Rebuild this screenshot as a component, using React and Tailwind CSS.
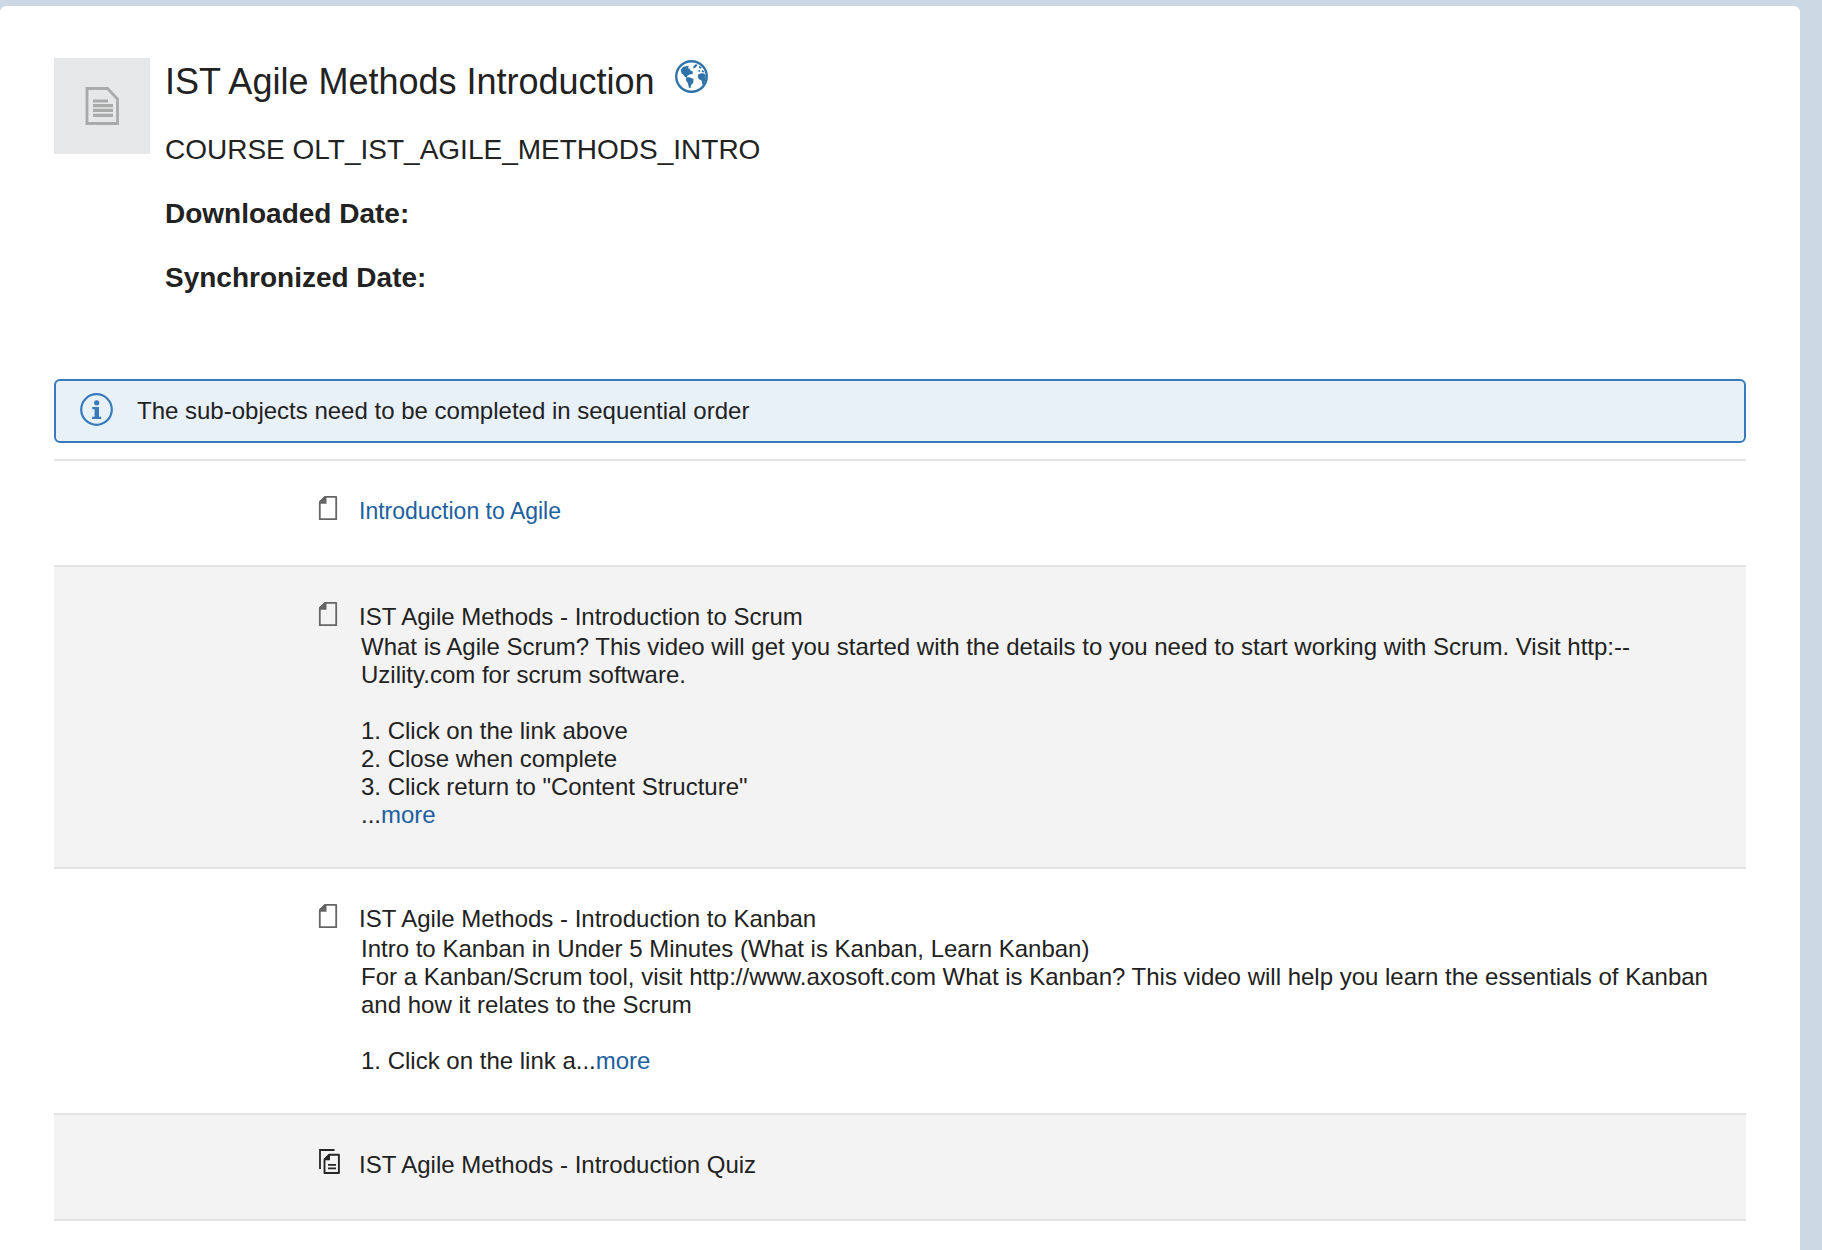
import React from "react";

function DocumentIcon() {
  return (
    <svg width="36" height="40" viewBox="0 0 36 40" fill="none" aria-hidden="true">
      <path d="M3 2.500h20.500l10 10.500v24.500H3z" stroke="#a9abab" strokeWidth="2.800" />
      <path d="M9 15h15M9 19.700h20M9 24.400h20M9 29.300h20" stroke="#a9abab" strokeWidth="3.200" />
    </svg>
  );
}

function GlobeIcon() {
  return (
    <svg width="33" height="33" viewBox="0 0 32 32" aria-hidden="true">
      <circle cx="16" cy="16" r="14.800" fill="none" stroke="#2f74a8" strokeWidth="2.300" />
      <path
        fill="#2f74a8"
        d="M5.500 9.500 8 6.500l4-.8 1.500.3L12.500 8l2 .5.500 2 2 .2.300 2.800-3 .5-2.300 1.300-.6 2-2-1-1.300-2-1.700-1.200zM11 16.500l3 .3 4 1.700-.3 3.500-2.200 2.500-.5 3-1.500-.5-1-4.500-2-3zM22.500 14l3-1.200 3 .4 1.300 2-.3 4-1.500 4-1.500.8-.5-4-3-1.500-.8-2zM17.500 6.500l2.500-2.300 2 .4-2 2.700-2 1zM23.500 5.500l2.500 1.700-.8 1.300-1.900-.8zM26 9.500l2 1.200.4 1.500-2.400-.5zM23 9.500l1.500.7-.5 1.600-1.500-.8z"
      />
    </svg>
  );
}

function InfoIcon() {
  return (
    <svg width="33" height="33" viewBox="0 0 33 33" aria-hidden="true">
      <circle cx="16.500" cy="16.500" r="15.300" fill="none" stroke="#377bbd" strokeWidth="2.200" />
      <circle cx="16.700" cy="9.800" r="2.600" fill="#377bbd" />
      <path fill="#377bbd" d="M12.300 14h6.700v9.800h2.300V26h-9.200v-2.200h2.500v-7.500h-2.300z" />
    </svg>
  );
}

function PageIcon() {
  return (
    <svg width="22" height="26" viewBox="0 0 22 26" fill="none" aria-hidden="true">
      <path d="M7 1.800h11.200v22.400H1.800V7z" stroke="#666" strokeWidth="1.800" strokeLinejoin="round" />
      <path d="M6.500 1.500h2V8.700H1.500V6.500z" fill="#666" />
    </svg>
  );
}

function QuizIcon() {
  return (
    <svg width="23" height="26" viewBox="0 0 23 26" fill="none" stroke="#262626" aria-hidden="true">
      <path d="M2 20V1h14.500" strokeWidth="1.800" />
      <path d="M11 5.800h9.900v18.200H6.500V10.500z" strokeWidth="1.900" strokeLinejoin="round" />
      <path d="M10.500 5.500h1.500v5.800H6v-1.500z" fill="#262626" stroke="none" />
      <path d="M10 15.800h8M10 19.300h8" strokeWidth="1.700" />
    </svg>
  );
}

function Row({ icon, title, titleSize = "text-2xl", children }) {
  return (
    <li className="border-t-2 border-[#e3e3e3] pt-[34px] pr-7 pb-[38px] pl-66 last:border-b-2 even:bg-[#f3f3f3]">
      <div className="flex items-start">
        <span className="w-[41px] shrink-0">{icon}</span>
        <div className="min-w-0">
          <h2 className={titleSize}>
            <span className="block leading-8">{title}</span>
          </h2>
          {children && <div className="pl-0.5 leading-7">{children}</div>}
        </div>
      </div>
    </li>
  );
}

function Link({ children }) {
  return (
    <a href="#" className="text-[#20609f] hover:underline">
      {children}
    </a>
  );
}

export default function App() {
  return (
    <div className="flex min-h-screen bg-[#ccd8e4] pt-1.5 pr-[22px] font-['Liberation_Sans',Arial,sans-serif] text-[#222]">
      <main className="grow rounded-t-md bg-white px-[54px] pt-13 text-2xl">
        <header className="flex h-80 items-start gap-[15px]">
          <div className="flex size-24 shrink-0 items-center justify-center bg-[#e5e7e9]">
            <DocumentIcon />
          </div>
          <div className="pt-0.5">
            <div className="flex items-start gap-5">
              <h1 className="text-4xl leading-11">IST Agile Methods Introduction</h1>
              <GlobeIcon />
            </div>
            <p className="mt-7 text-[28px] leading-9">COURSE OLT_IST_AGILE_METHODS_INTRO</p>
            <p className="mt-7 text-[28px] leading-9 font-bold">Downloaded Date:</p>
            <p className="mt-7 text-[28px] leading-9 font-bold">Synchronized Date:</p>
          </div>
        </header>

        <div
          role="status"
          className="mt-px flex items-start gap-6 rounded-md border-2 border-[#377bbd] bg-[#e8f0f8] px-6 py-3"
        >
          <InfoIcon />
          <p className="leading-9">The sub-objects need to be completed in sequential order</p>
        </div>

        <ul className="mt-4">
          <Row
            icon={<PageIcon />}
            title={<Link>Introduction to Agile</Link>}
            titleSize="text-[23px]"
          />
          <Row icon={<PageIcon />} title="IST Agile Methods - Introduction to Scrum">
            <p>
              What is Agile Scrum? This video will get you started with the details to you need to
              start working with Scrum. Visit http:--
              <br />
              Uzility.com for scrum software.
            </p>
            <p className="mt-7">1. Click on the link above</p>
            <p>2. Close when complete</p>
            <p>3. Click return to "Content Structure"</p>
            <p>
              ...<Link>more</Link>
            </p>
          </Row>
          <Row icon={<PageIcon />} title="IST Agile Methods - Introduction to Kanban">
            <p>Intro to Kanban in Under 5 Minutes (What is Kanban, Learn Kanban)</p>
            <p>
              For a Kanban/Scrum tool, visit http://www.axosoft.com What is Kanban? This video will
              help you learn the essentials of Kanban and how it relates to the Scrum
            </p>
            <p className="mt-7">
              1. Click on the link a...<Link>more</Link>
            </p>
          </Row>
          <Row icon={<QuizIcon />} title="IST Agile Methods - Introduction Quiz" />
        </ul>
      </main>
    </div>
  );
}
